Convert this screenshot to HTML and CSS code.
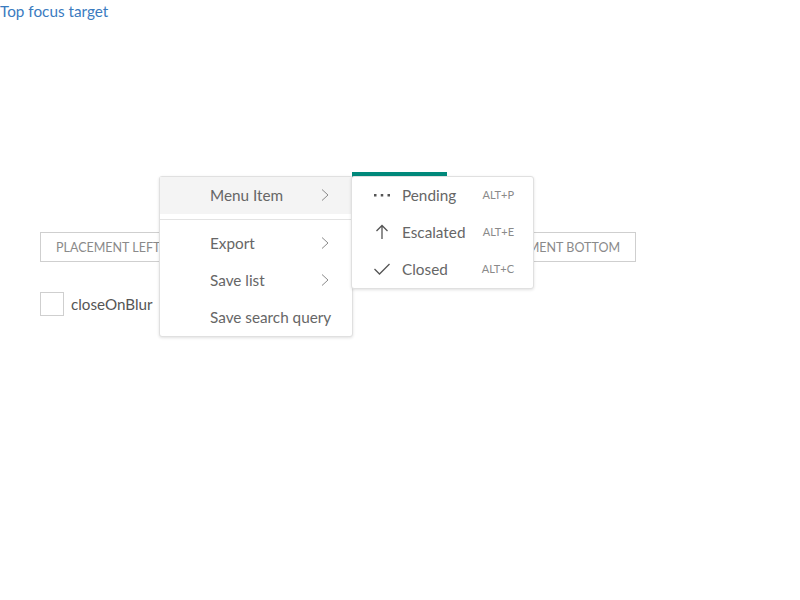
FILE: index.html
```html
<!DOCTYPE html>
<html>
<head>
<meta charset="utf-8">
<link rel="stylesheet" href="styles.css">
</head>
<body>
<a class="top-link" href="#">Top focus target</a>
<div class="demo">
  <div class="btn-row">
    <button class="btn">Placement left</button>
    <button class="btn">Placement bottom</button>
  </div>
  <label class="check-row">
    <span class="checkbox"></span>
    <span class="check-label">closeOnBlur</span>
  </label>
</div>

<div class="trigger-bar"></div>

<div class="menu main-menu">
  <div class="item active"><span class="label">Menu Item</span><svg class="chev" viewBox="0 0 10 14" width="10" height="14"><path d="M2 1.5 L8 7 L2 12.5" fill="none" stroke="#8a8a8a" stroke-width="1"/></svg></div>
  <div class="sep"></div>
  <div class="item"><span class="label">Export</span><svg class="chev" viewBox="0 0 10 14" width="10" height="14"><path d="M2 1.5 L8 7 L2 12.5" fill="none" stroke="#8a8a8a" stroke-width="1"/></svg></div>
  <div class="item"><span class="label">Save list</span><svg class="chev" viewBox="0 0 10 14" width="10" height="14"><path d="M2 1.5 L8 7 L2 12.5" fill="none" stroke="#8a8a8a" stroke-width="1"/></svg></div>
  <div class="item"><span class="label">Save search query</span></div>
</div>

<div class="menu sub-menu">
  <div class="item">
    <svg class="icon" viewBox="0 0 18 16" width="18" height="16"><rect x="1" y="7" width="2.5" height="2.5" fill="#555"/><rect x="7.75" y="7" width="2.5" height="2.5" fill="#555"/><rect x="14.5" y="7" width="2.5" height="2.5" fill="#555"/></svg>
    <span class="label">Pending</span><span class="kbd">ALT+P</span>
  </div>
  <div class="item">
    <svg class="icon" viewBox="0 0 18 16" width="18" height="16"><path d="M9 15 V1.5 M3.5 7 L9 1.5 L14.5 7" fill="none" stroke="#555" stroke-width="1.3"/></svg>
    <span class="label">Escalated</span><span class="kbd">ALT+E</span>
  </div>
  <div class="item">
    <svg class="icon" viewBox="0 0 18 16" width="18" height="16"><path d="M1.5 8 L6.5 13 L16.5 3" fill="none" stroke="#555" stroke-width="1.3"/></svg>
    <span class="label">Closed</span><span class="kbd">ALT+C</span>
  </div>
</div>
</body>
</html>
```

FILE: styles.css
```css
html, body {
  margin: 0;
  padding: 0;
  background: #fff;
  font-family: "Lato", "Noto Sans", sans-serif;
}

.top-link {
  display: block;
  color: #3a7bbf;
  text-decoration: none;
  font-size: 15.3px;
  line-height: 22px;
  height: 24px;
}

.demo {
  padding: 208px 0 0 40px;
}

.btn-row {
  display: flex;
  justify-content: space-between;
  width: 596px;
}

.btn {
  height: 30px;
  padding: 0 15px;
  border: 1px solid #cfcfcf;
  background: #fff;
  color: #8a8a8a;
  text-transform: uppercase;
  font-family: inherit;
  font-size: 12.5px;
  line-height: 28px;
  padding-top: 1px;
  border-radius: 0;
}

.check-row {
  display: flex;
  align-items: center;
  gap: 7px;
  margin-top: 30px;
}

.checkbox {
  width: 22px;
  height: 22px;
  border: 1px solid #cfcfcf;
  background: #fff;
}

.check-label {
  font-size: 15.2px;
  color: #555;
}

.trigger-bar {
  position: absolute;
  left: 352px;
  top: 172px;
  width: 95px;
  height: 5px;
  background: #00897b;
}

.menu {
  position: absolute;
  background: #fff;
  border: 1px solid #e0e0e0;
  border-radius: 3px;
  box-shadow: 0 1px 3px rgba(0,0,0,0.12);
  font-size: 15.3px;
  color: #666;
  white-space: nowrap;
}

.main-menu {
  left: 159px;
  top: 176px;
  width: 192px;
}

.sub-menu {
  left: 351px;
  top: 176px;
  width: 181px;
  z-index: 2;
}

.item {
  height: 37px;
  box-sizing: border-box;
  padding-bottom: 2px;
  display: flex;
  align-items: center;
}

.main-menu .item {
  padding-left: 50px;
  padding-right: 22px;
}

.main-menu .item.active {
  background: #f4f4f4;
}

.main-menu .label {
  flex: 1;
}

.sep {
  height: 1px;
  background: #e3e3e3;
  margin: 5px 0;
}

.sub-menu .item {
  padding-left: 21px;
  padding-right: 19px;
}

.sub-menu .icon {
  width: 18px;
  margin-right: 11px;
}

.sub-menu .label {
  flex: 1;
}

.kbd {
  font-size: 11px;
  color: #8a8a8a;
}
```
